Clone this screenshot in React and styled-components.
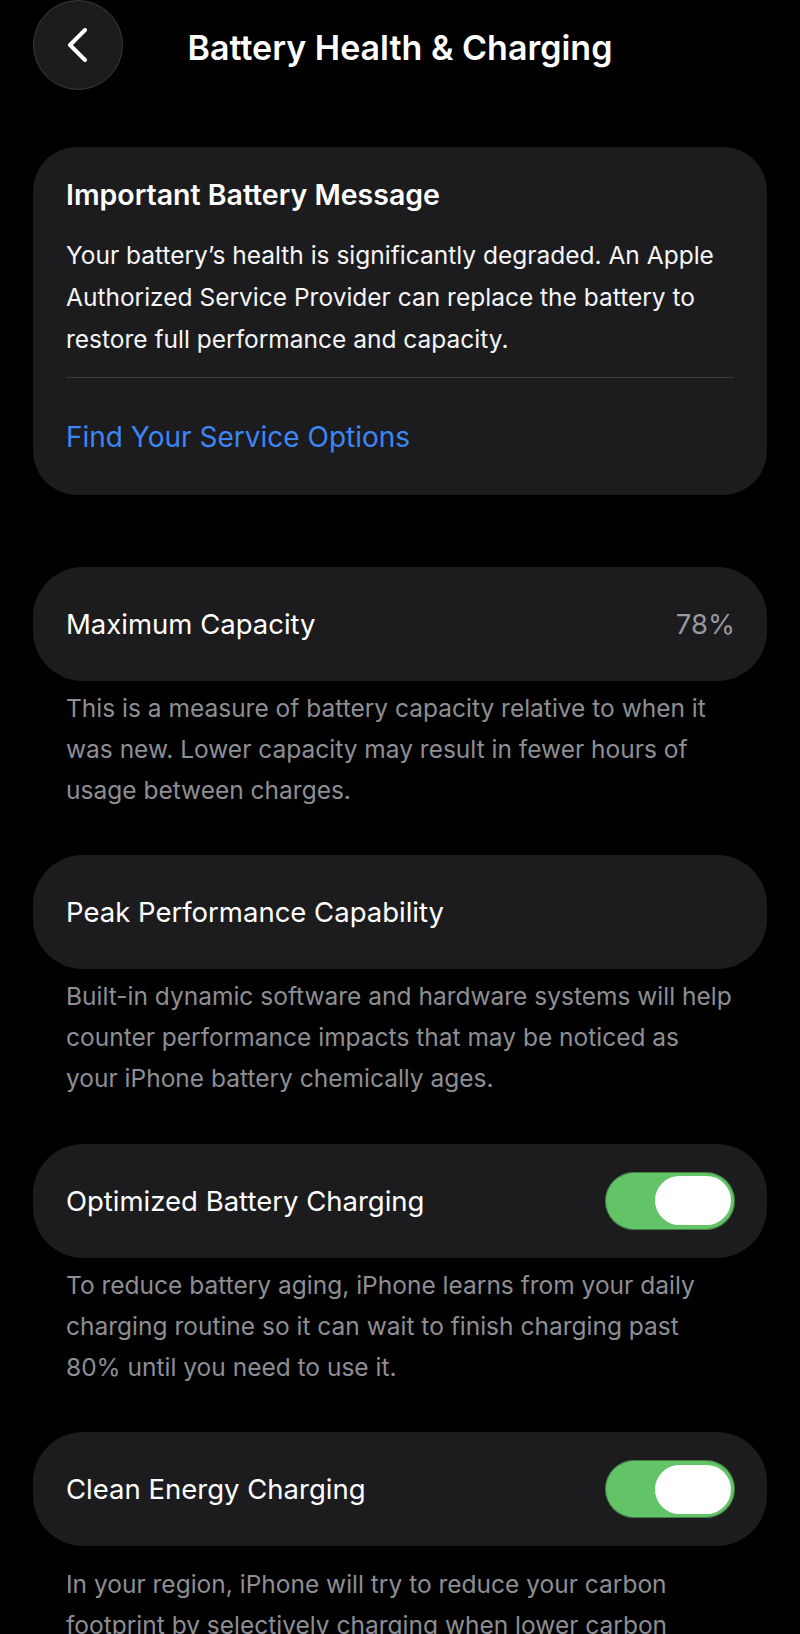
import React from "react";
import styled, { createGlobalStyle } from "styled-components";

const Global = createGlobalStyle`
  html, body { margin: 0; padding: 0; background: #000; }
  body {
    font-family: Inter, "Noto Sans", "Liberation Sans", sans-serif;
    color: #fff;
    -webkit-font-smoothing: antialiased;
  }
`;

const Page = styled.div`
  width: 800px;
  min-height: 1634px;
  background: #000;
  box-sizing: border-box;
  padding: 0 33px;
  overflow: hidden;
`;

const Header = styled.header`
  display: grid;
  grid-template-columns: 90px 1fr 90px;
  align-items: center;
  height: 90px;
`;

const BackButton = styled.button`
  width: 90px;
  height: 90px;
  border-radius: 50%;
  background: #1c1c1e;
  border: 1.5px solid #3a3a3c;
  display: flex;
  align-items: center;
  justify-content: center;
  padding: 0;
  cursor: pointer;
`;

const Title = styled.h1`
  margin: 0;
  padding-top: 4px;
  text-align: center;
  font-size: 34px;
  font-weight: 600;
  letter-spacing: 0;
  color: #fff;
`;

const MessageCard = styled.section`
  margin-top: 57px;
  background: #1c1c1e;
  border-radius: 44px;
  padding: 28px 33px 0;
`;

const CardTitle = styled.h2`
  margin: 0;
  font-size: 28.5px;
  font-weight: 600;
  line-height: 40px;
  letter-spacing: 0;
`;

const CardBody = styled.p`
  margin: 19px 0 0;
  font-size: 24.5px;
  line-height: 42px;
  color: #f5f5f7;
`;

const Divider = styled.hr`
  margin: 17px 0 0;
  border: 0;
  height: 1px;
  background: #3a3a3c;
`;

const LinkRow = styled.a`
  display: flex;
  align-items: center;
  height: 117px;
  font-size: 28px;
  color: #3d86f4;
  text-decoration: none;
`;

const Section = styled.section`
  margin-top: ${(p) => p.$top}px;
`;

const Row = styled.div`
  display: flex;
  align-items: center;
  justify-content: space-between;
  height: 114px;
  background: #1c1c1e;
  border-radius: 50px;
  padding: 0 32px 0 33px;
  box-sizing: border-box;
`;

const RowLabel = styled.span`
  font-size: 27.5px;
  color: #fff;
`;

const RowValue = styled.span`
  font-size: 27.5px;
  color: #98989e;
`;

const Footnote = styled.p`
  margin: ${(p) => p.$gap}px 0 0;
  padding: 0 33px;
  font-size: 24.5px;
  line-height: 41px;
  color: #8e8e93;
`;

const Track = styled.div`
  width: 130px;
  height: 58px;
  border-radius: 29px;
  background: #62c466;
  box-shadow: inset 0 0 0 1px rgba(0, 0, 0, 0.35);
  display: flex;
  align-items: center;
  justify-content: ${(p) => (p.$on ? "flex-end" : "flex-start")};
  padding: 0 4px;
  box-sizing: border-box;
`;

const Knob = styled.div`
  width: 76px;
  height: 49px;
  border-radius: 25px;
  background: #fff;
`;

function Toggle({ on }) {
  return (
    <Track $on={on} role="switch" aria-checked={on}>
      <Knob />
    </Track>
  );
}

function Chevron() {
  return (
    <svg width="24" height="34" viewBox="0 0 24 34" fill="none">
      <path
        d="M19 2 L4 17 L19 32"
        stroke="#fff"
        strokeWidth="4"
        strokeLinecap="round"
        strokeLinejoin="round"
      />
    </svg>
  );
}

const sections = [
  {
    label: "Maximum Capacity",
    value: "78%",
    note:
      "This is a measure of battery capacity relative to when it was new. Lower capacity may result in fewer hours of usage between charges.",
    top: 71.5,
    gap: 7,
  },
  {
    label: "Peak Performance Capability",
    note:
      "Built-in dynamic software and hardware systems will help counter performance impacts that may be noticed as your iPhone battery chemically ages.",
    top: 44.5,
    gap: 7,
  },
  {
    label: "Optimized Battery Charging",
    toggle: true,
    note:
      "To reduce battery aging, iPhone learns from your daily charging routine so it can wait to finish charging past 80% until you need to use it.",
    top: 44.5,
    gap: 7,
  },
  {
    label: "Clean Energy Charging",
    toggle: true,
    note:
      "In your region, iPhone will try to reduce your carbon footprint by selectively charging when lower carbon emission electricity is available.",
    top: 44.5,
    gap: 18,
  },
];

export default function App() {
  return (
    <>
      <Global />
      <Page>
        <Header>
          <BackButton aria-label="Back">
            <Chevron />
          </BackButton>
          <Title>Battery Health &amp; Charging</Title>
          <span />
        </Header>

        <MessageCard>
          <CardTitle>Important Battery Message</CardTitle>
          <CardBody>
            Your battery’s health is significantly degraded. An Apple
            Authorized Service Provider can replace the battery to restore full
            performance and capacity.
          </CardBody>
          <Divider />
          <LinkRow href="#">Find Your Service Options</LinkRow>
        </MessageCard>

        {sections.map((s) => (
          <Section key={s.label} $top={s.top}>
            <Row>
              <RowLabel>{s.label}</RowLabel>
              {s.value && <RowValue>{s.value}</RowValue>}
              {s.toggle && <Toggle on />}
            </Row>
            <Footnote $gap={s.gap}>{s.note}</Footnote>
          </Section>
        ))}
      </Page>
    </>
  );
}
